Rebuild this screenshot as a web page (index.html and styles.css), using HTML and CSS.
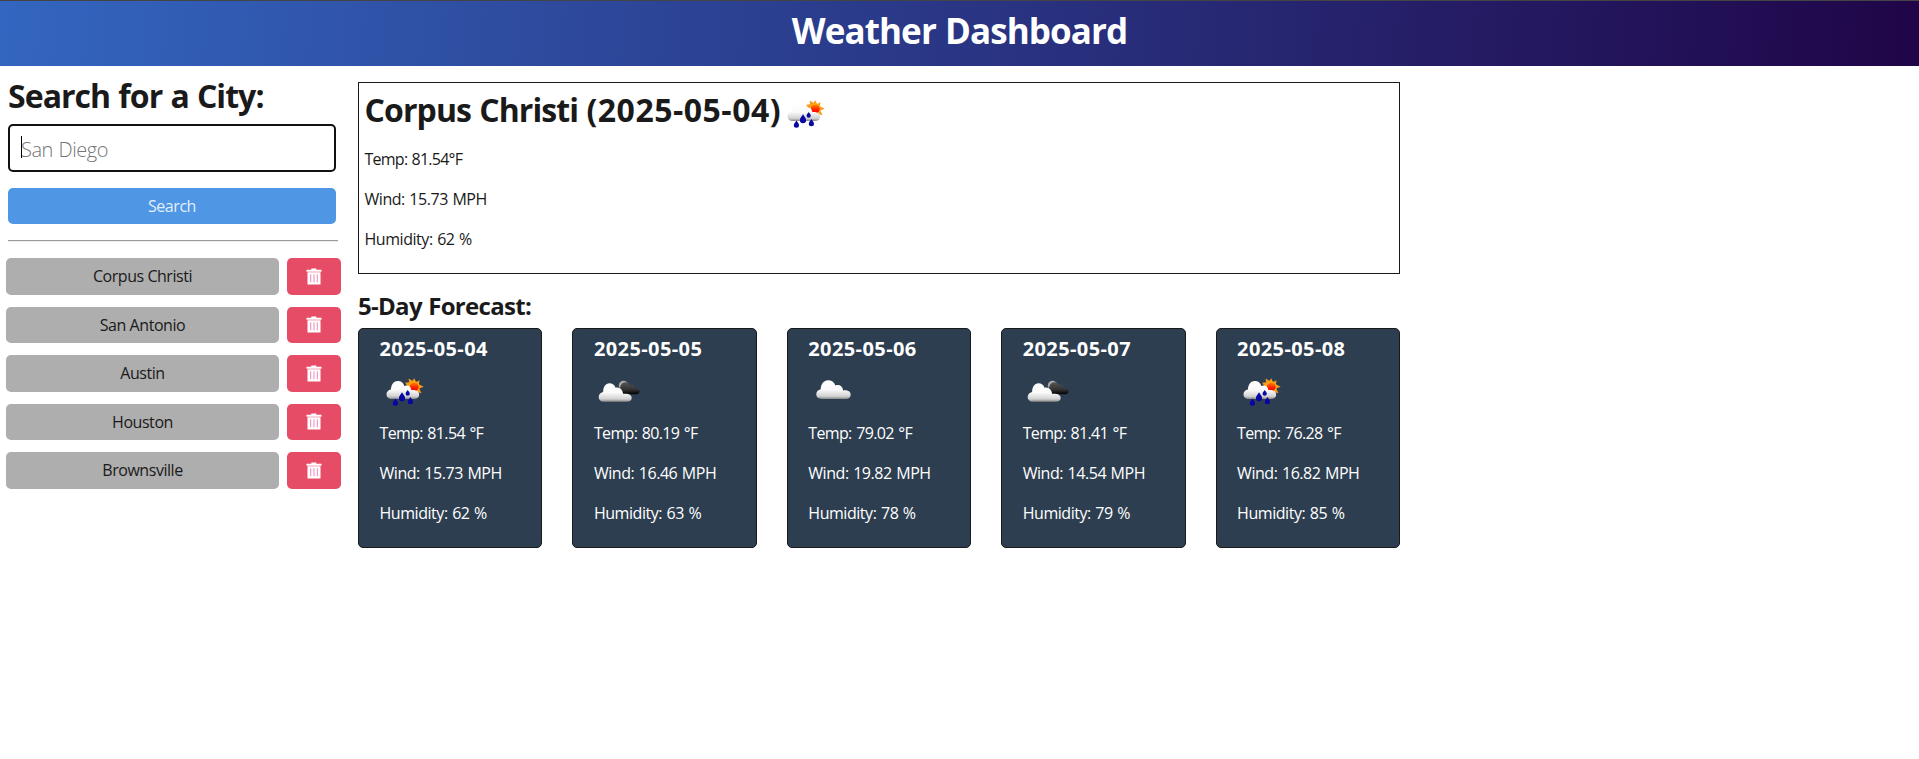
FILE: index.html
```
<!DOCTYPE html>
<html lang="en">
<head>
<meta charset="utf-8">
<title>Weather Dashboard</title>
<link rel="stylesheet" href="styles.css">
</head>
<body>
<svg class="defs" width="0" height="0" aria-hidden="true">
  <defs>
    <linearGradient id="white" x1="0" y1="0" x2="0" y2="1">
      <stop offset="0" stop-color="#fff"/><stop offset=".5" stop-color="#fafafa"/><stop offset=".85" stop-color="#d2d2d2"/><stop offset="1" stop-color="#888"/>
    </linearGradient>
    <linearGradient id="dark" x1="0" y1="0" x2="0" y2="1">
      <stop offset="0" stop-color="#555"/><stop offset=".6" stop-color="#333"/><stop offset="1" stop-color="#000"/>
    </linearGradient>
    <linearGradient id="sun" x1="0" y1="0" x2="0" y2="1">
      <stop offset="0" stop-color="#ff8a00"/><stop offset=".6" stop-color="#ff1e00"/><stop offset="1" stop-color="#f00"/>
    </linearGradient>
    <symbol id="rain" viewBox="0 0 50 50">
      <path fill="#f79a1c" d="M34.3 13.3l1.7 3.6 3.7-1.6-1 3.9 5 2.5-4.4 1.7 2.2 4.8-4.4-1.3-2.8 3.2-2.1-3.7-6-1 1.5-4-2.6-3.6 4-.5-.5-3.7 3.8 2.2z"/>
      <circle cx="34.3" cy="21.8" r="5.2" fill="#ffc21c"/>
      <circle cx="34.3" cy="21.8" r="4.5" fill="url(#sun)"/>
      <path fill="url(#white)" d="M12 34c-3.3 0-5.500-2-5.500-4.800 0-2.500 1.800-4.300 4.400-4.800.3-5 3-8.300 7-8.300 3.300 0 5.500 1.800 6.400 5 1-.6 2-.8 3-.5 2.300.2 3.700 1.900 4 4.500 4.500-.3 7.900 1.200 7.900 4.400 0 2.900-2 4.500-5.200 4.500z"/>
      <g fill="#0606a5"><path d="M15.500 33.500c1 2 2.500 3 2.500 4.800a2.600 2.500 0 0 1-5.200 0c0-1.800 1.700-2.800 2.700-4.800z"/><path d="M22 27.300c1.100 2.300 3.100 3.500 3.100 5.900a3.100 3 0 0 1-6.200 0c0-2.400 2-3.600 3.100-5.900z"/><path d="M27.700 24.900c.8 1.400 2.100 2.300 2.100 3.900a2.100 2 0 0 1-4.200 0c0-1.600 1.300-2.500 2.100-3.900z"/><path d="M30.400 31.900c1 2 2.600 3 2.600 4.900a2.600 2.500 0 0 1-5.200 0c0-1.900 1.600-2.900 2.600-4.900z"/></g>
    </symbol>
    <symbol id="broken" viewBox="0 0 50 50">
      <circle cx="29.500" cy="20.500" r="4.700" fill="#aaa"/>
      <path fill="url(#dark)" d="M26 29.300c-1-3-1.500-5 .2-7 .6-3.800 3.500-5.500 6.300-4.900 2 .2 3.200 1.500 3.700 2.600 2.200-.8 4.300.4 4.800 3 3 .1 4.800 1.200 4.700 3.200-.1 2-1.700 3.100-4 3.100z"/>
      <path fill="url(#white)" d="M10 36.700c-3.200 0-5.300-2-5.300-4.800 0-2.500 1.700-4.200 4.400-4.900 0-4.900 2.500-8.700 6.300-8.700 3 0 5.200 1.700 6.200 4.400 3.800-1.100 7 2 7.500 6.100 4.800-.6 8.600.8 8.600 4 0 2.600-1.700 3.900-4.800 3.900z"/>
    </symbol>
    <symbol id="cloud" viewBox="0 0 50 50">
      <path fill="url(#white)" d="M14 34c-3.500 0-5.700-1.900-5.700-4.700 0-2.600 1.600-4.400 4.400-5 .2-5.500 3.200-9 7.300-9 3.300 0 6.300 1.900 7.400 5.200 4-1.300 7.300.8 7.700 4.900 4.700-.4 7.600 1.100 7.600 4.400 0 2.700-1.800 4.200-4.700 4.200z"/>
    </symbol>
    <symbol id="trash" viewBox="0 0 16 17">
      <path fill="#fff" fill-rule="evenodd" d="M.5 1.800h4.800V.5h5v1.300h5.200v1.900H.5zM1.500 4.300h13v12.200h-13z"/>
      <path fill="#ee88b4" d="M4.200 6.300h1v8h-1zM7.500 6.300h1v8h-1zM10.800 6.300h1v8h-1z"/>
    </symbol>
  </defs>
</svg>
<header class="header"><h1>Weather Dashboard</h1></header>
<main class="layout">
  <aside class="sidebar">
    <form class="search">
      <h2>Search for a City:</h2>
      <div class="field"><span class="caret"></span><span>San Diego</span></div>
      <button class="submit" type="button">Search</button>
    </form>
    <hr>
    <div class="history">
      <div class="row"><button class="city" type="button">Corpus Christi</button><button class="delete" type="button" aria-label="Delete"><svg><use href="#trash"/></svg></button></div>
      <div class="row"><button class="city" type="button">San Antonio</button><button class="delete" type="button" aria-label="Delete"><svg><use href="#trash"/></svg></button></div>
      <div class="row"><button class="city" type="button">Austin</button><button class="delete" type="button" aria-label="Delete"><svg><use href="#trash"/></svg></button></div>
      <div class="row"><button class="city" type="button">Houston</button><button class="delete" type="button" aria-label="Delete"><svg><use href="#trash"/></svg></button></div>
      <div class="row"><button class="city" type="button">Brownsville</button><button class="delete" type="button" aria-label="Delete"><svg><use href="#trash"/></svg></button></div>
    </div>
  </aside>
  <div class="content">
    <section class="today">
      <div class="today-head"><h2>Corpus Christi <span class="date">(2025-05-04)</span></h2><svg class="weather"><use href="#rain"/></svg></div>
      <p class="temp">Temp: 81.54°F</p><p>Wind: 15.73 MPH</p><p>Humidity: 62 %</p>
    </section>
    <h3 class="forecast-title">5-Day Forecast:</h3>
    <section class="forecast">
      <article class="card"><h4>2025-05-04</h4><svg class="weather"><use href="#rain"/></svg><p class="temp">Temp: 81.54 °F</p><p>Wind: 15.73 MPH</p><p>Humidity: 62 %</p></article>
      <article class="card"><h4>2025-05-05</h4><svg class="weather"><use href="#broken"/></svg><p class="temp">Temp: 80.19 °F</p><p>Wind: 16.46 MPH</p><p>Humidity: 63 %</p></article>
      <article class="card"><h4>2025-05-06</h4><svg class="weather"><use href="#cloud"/></svg><p class="temp">Temp: 79.02 °F</p><p>Wind: 19.82 MPH</p><p>Humidity: 78 %</p></article>
      <article class="card"><h4>2025-05-07</h4><svg class="weather"><use href="#broken"/></svg><p class="temp">Temp: 81.41 °F</p><p>Wind: 14.54 MPH</p><p>Humidity: 79 %</p></article>
      <article class="card"><h4>2025-05-08</h4><svg class="weather"><use href="#rain"/></svg><p class="temp">Temp: 76.28 °F</p><p>Wind: 16.82 MPH</p><p>Humidity: 85 %</p></article>
    </section>
  </div>
</main>
</body>
</html>
```
FILE: styles.css
```
* { box-sizing: border-box; }
body { margin: 0; background: #fff; color: #1a1a1a; font: 16px/24px "Segoe UI", "Open Sans", "Noto Sans", sans-serif; letter-spacing: -0.45px; word-spacing: 0.8px; }
h1, h2, h3, h4, p { margin: 0; white-space: nowrap; }
.defs { display: block; }
.header { height: 66px; border-top: 1px solid #444; background: linear-gradient(95deg, #3366c0, #200548); background-origin: border-box; color: #fff; text-align: center; padding-top: 8px; }
.header h1 { font-size: 35px; line-height: 44px; font-weight: 700; letter-spacing: -0.9px; }
.layout { display: flex; }
.sidebar { width: 358px; padding: 10px 16px 0 6px; }
.search { padding: 0 0 0 2px; }
.search h2 { font-size: 32px; line-height: 40px; letter-spacing: -0.95px; }
.field { width: 328px; height: 48px; margin-top: 8px; border: 2px solid #111; border-radius: 5px; padding: 3px 11px 0; display: flex; align-items: center; color: #757575; font-size: 20px; font-weight: 300; letter-spacing: -0.45px; }
.caret { width: 1px; height: 22px; margin: -5px -1px 0 0; background: #000; }
.submit, .city, .delete { font: inherit; letter-spacing: -0.45px; border: 0; border-radius: 5px; padding: 0; }
.submit { display: block; width: 328px; height: 36px; margin-top: 16px; background: #4f96e5; color: #e2eefa; }
hr { width: 330px; height: 2px; margin: 16px 0 16px 2px; border: 0; border-top: 1px solid #999; border-bottom: 1px solid #eee; }
.history { display: grid; gap: 12px; }
.row { display: grid; grid-template-columns: 273px 54px; column-gap: 8px; height: 36.5px; }
.city { background: #aeaeae; color: #1a1a1a; }
.delete { background: #e64c66; display: flex; align-items: center; justify-content: center; }
.delete svg { width: 16px; height: 17px; }
.content { width: 1042px; padding-top: 16px; }
.today { height: 192px; border: 1px solid #1a1a1a; padding: 4px 5px; }
.today-head { display: flex; height: 50px; margin-bottom: 10px; }
.today-head h2 { width: 417px; font-size: 32px; line-height: 46px; letter-spacing: -0.9px; }
.today-head .date { letter-spacing: 0.5px; }
.weather { display: block; width: 50px; height: 50px; }
.today p, .today-head h2 { padding-left: 0.5px; }
.today p + p, .card p + p { margin-top: 16px; }
p.temp { letter-spacing: -0.75px; word-spacing: 0.8px; }
.forecast-title { margin-top: 17px; font-size: 24px; line-height: 30px; letter-spacing: -0.7px; }
.forecast { display: grid; grid-template-columns: repeat(5, 184.4px); justify-content: space-between; margin-top: 7px; }
.card { height: 220px; background: #2d3e50; border: 1px solid #1a1a1a; border-radius: 5px; color: #fff; padding: 6px 20.5px; }
.card h4 { font-size: 20px; line-height: 28px; letter-spacing: 0.4px; }
.card .weather { margin: 2px 0 6px; }
.card p.temp { letter-spacing: -0.65px; word-spacing: 1px; }
```
